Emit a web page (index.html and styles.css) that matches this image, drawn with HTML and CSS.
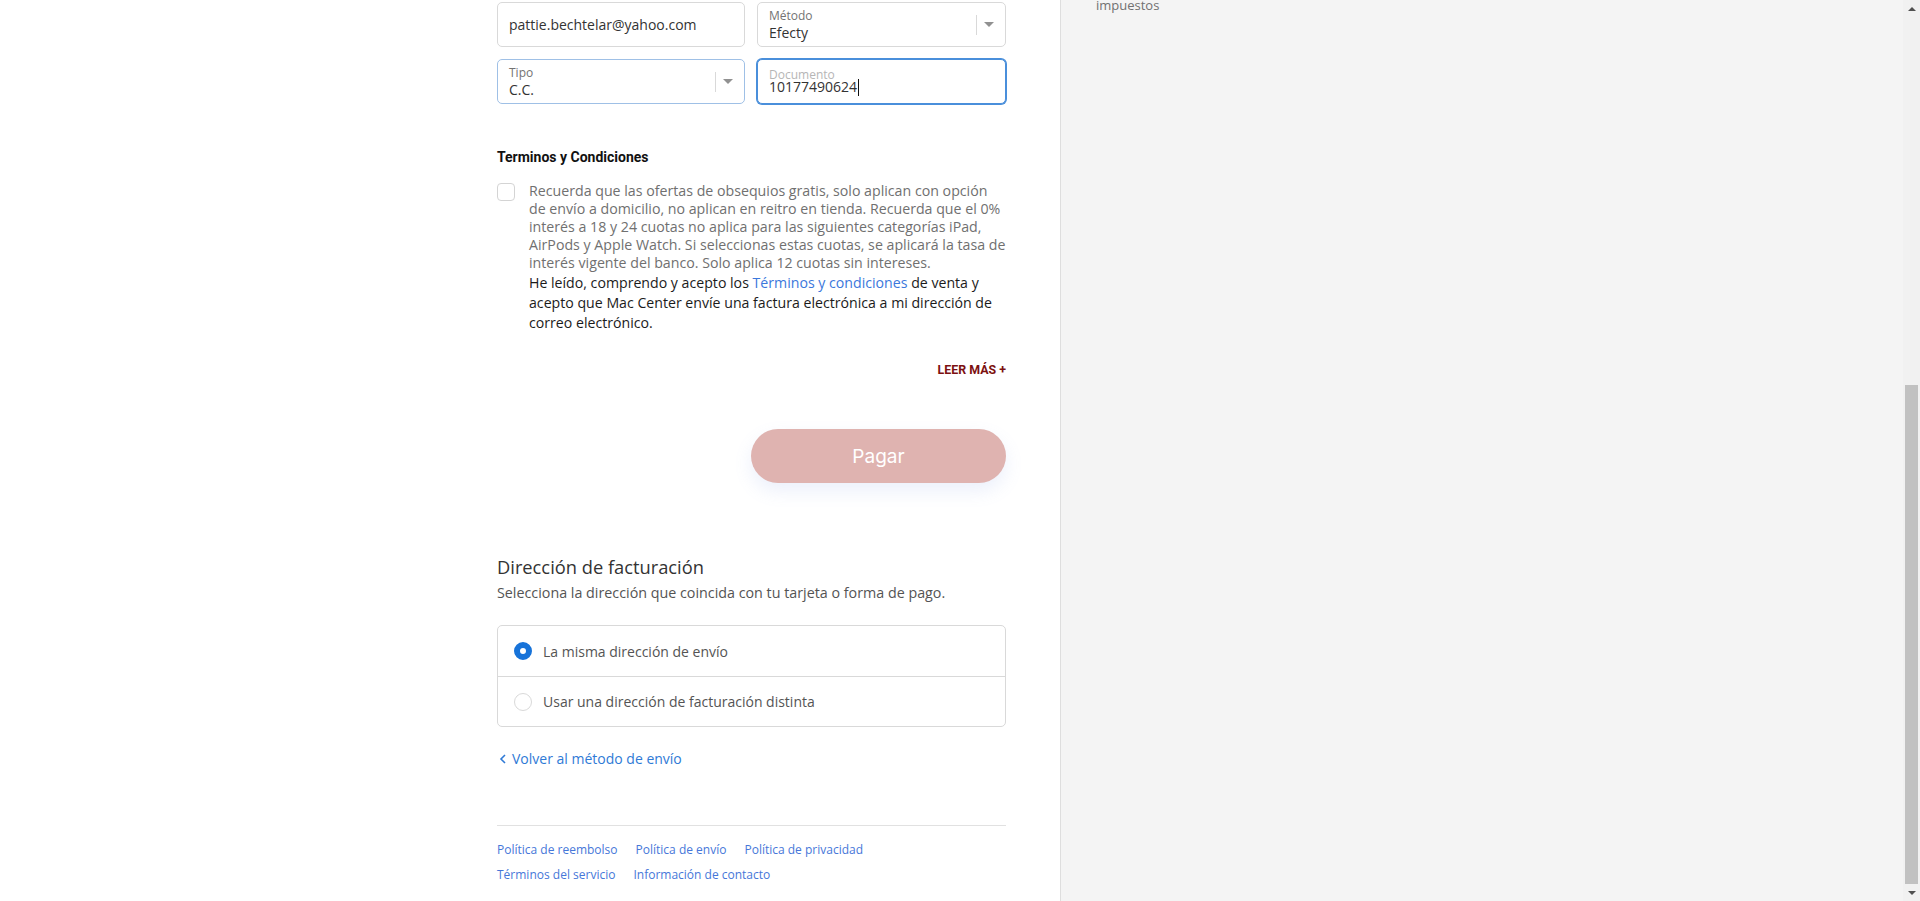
FILE: index.html
```html
<!DOCTYPE html>
<html lang="es">
<head>
<meta charset="utf-8">
<title>Checkout - Pago</title>
<link rel="stylesheet" href="styles.css">
</head>
<body>
<div class="page">
  <main class="main">
    <div class="content">
      <div class="field-grid">
        <div class="field">
          <span class="field-value">pattie.bechtelar@yahoo.com</span>
        </div>
        <div class="field select">
          <div class="select-text">
            <span class="field-label">Método</span>
            <span class="field-value">Efecty</span>
          </div>
          <span class="select-divider"></span>
          <span class="select-caret"></span>
        </div>
        <div class="field select hover">
          <div class="select-text">
            <span class="field-label">Tipo</span>
            <span class="field-value">C.C.</span>
          </div>
          <span class="select-divider"></span>
          <span class="select-caret"></span>
        </div>
        <div class="field focus">
          <div class="select-text tight">
            <span class="field-label light">Documento</span>
            <span class="field-value">10177490624<span class="cursor"></span></span>
          </div>
        </div>
      </div>

      <section class="terms">
        <h3 class="terms-title">Terminos y Condiciones</h3>
        <div class="check-row">
          <span class="checkbox"></span>
          <div class="terms-text">
            <p class="terms-gray">Recuerda que las ofertas de obsequios gratis, solo aplican con opción de envío a domicilio, no aplican en reitro en tienda. Recuerda que el 0% interés a 18 y 24 cuotas no aplica para las siguientes categorías iPad, AirPods y Apple Watch. Si seleccionas estas cuotas, se aplicará la tasa de interés vigente del banco. Solo aplica 12 cuotas sin intereses.</p>
            <p class="terms-dark">He leído, comprendo y acepto los <a class="terms-link" href="#">Términos y condiciones</a> de venta y acepto que Mac Center envíe una factura electrónica a mi dirección de correo electrónico.</p>
          </div>
        </div>
        <div class="leer-row"><a class="leer" href="#">LEER MÁS +</a></div>
      </section>

      <div class="pay-row">
        <button class="pay-btn" type="button">Pagar</button>
      </div>

      <section class="billing">
        <h2 class="billing-title">Dirección de facturación</h2>
        <p class="billing-sub">Selecciona la dirección que coincida con tu tarjeta o forma de pago.</p>
        <div class="radio-box">
          <div class="radio-row">
            <span class="radio checked"></span>
            <span class="radio-label">La misma dirección de envío</span>
          </div>
          <div class="radio-row">
            <span class="radio"></span>
            <span class="radio-label">Usar una dirección de facturación distinta</span>
          </div>
        </div>
      </section>

      <a class="back-link" href="#">
        <svg class="back-chevron" width="8" height="10" viewBox="0 0 8 10"><path d="M6 1 L2 5 L6 9" fill="none" stroke="currentColor" stroke-width="1.6"/></svg>
        <span>Volver al método de envío</span>
      </a>

      <footer class="footer">
        <ul class="policy-list">
          <li><a href="#">Política de reembolso</a></li>
          <li><a href="#">Política de envío</a></li>
          <li><a href="#">Política de privacidad</a></li>
          <li><a href="#">Términos del servicio</a></li>
          <li><a href="#">Información de contacto</a></li>
        </ul>
      </footer>
    </div>
  </main>

  <aside class="sidebar">
    <p class="sidebar-note">impuestos</p>
  </aside>

  <div class="scrollbar">
    <div class="sb-btn"><span class="sb-arrow up"></span></div>
    <div class="sb-track">
      <div class="sb-space"></div>
      <div class="sb-thumb"></div>
    </div>
    <div class="sb-btn"><span class="sb-arrow down"></span></div>
  </div>
</div>
</body>
</html>
```

FILE: styles.css
```css
* { box-sizing: border-box; }

html, body {
  margin: 0;
  padding: 0;
  height: 901px;
  overflow: hidden;
  background: #ffffff;
}

body {
  font-family: "Open Sans", "Noto Sans", Arial, sans-serif;
  font-size: 14px;
  color: #333333;
}

.page {
  display: flex;
  height: 901px;
}

/* ---------- main column ---------- */
.main {
  flex: 0 0 1060px;
  background: #ffffff;
  padding-left: 497px;
  padding-right: 54px;
}

.content {
  width: 509px;
  padding-top: 2px;
}

.field-grid {
  display: grid;
  grid-template-columns: 248px 249px;
  column-gap: 12px;
  row-gap: 12px;
}

.field {
  position: relative;
  height: 45px;
  border: 1px solid #d9d9d9;
  border-radius: 5px;
  background: #fff;
  display: flex;
  align-items: center;
  padding: 0 11px;
}

.field.hover {
  border-color: #9fc0e6;
}

.field.focus {
  border-color: #4a8fdb;
  box-shadow: 0 0 0 1px #4a8fdb;
}

.field-value {
  font-size: 14px;
  color: #333333;
  line-height: 17px;
}

.select-text {
  flex: 1;
  display: flex;
  flex-direction: column;
  padding-top: 1px;
}

.select-text.tight {
  padding-top: 0;
}

.field-label {
  font-size: 12px;
  line-height: 14px;
  color: #737373;
  margin-bottom: 1px;
}

.field-label.light {
  color: #b6b6b6;
  margin-bottom: -4px;
}

.select-divider {
  width: 1px;
  height: 20px;
  background: #d9d9d9;
  margin-right: 7px;
}

.select-caret {
  width: 0;
  height: 0;
  border-left: 5px solid transparent;
  border-right: 5px solid transparent;
  border-top: 5px solid #919191;
}

.cursor {
  display: inline-block;
  width: 1px;
  height: 17px;
  background: #111;
  vertical-align: -4px;
  margin-left: 1px;
}

/* ---------- terms ---------- */
.terms {
  margin-top: 44px;
}

.terms-title {
  margin: 0;
  font-family: Roboto, "Liberation Sans", Arial, sans-serif;
  font-weight: bold;
  font-size: 14px;
  line-height: 18px;
  color: #111;
}

.check-row {
  display: flex;
  align-items: flex-start;
  margin-top: 17px;
}

.checkbox {
  flex: 0 0 18px;
  width: 18px;
  height: 18px;
  border: 1px solid #d4d4d4;
  border-radius: 4px;
  background: #fff;
  margin-right: 14px;
}

.terms-text {
  flex: 1;
}

.terms-gray {
  margin: 0;
  margin-top: -1px;
  font-size: 14.2px;
  line-height: 18px;
  color: #707070;
}

.terms-dark {
  margin: 0;
  margin-top: 1px;
  font-size: 14.15px;
  line-height: 20px;
  color: #1b1b1b;
}

.terms-link {
  color: #3b78dc;
  text-decoration: none;
}

.leer-row {
  display: flex;
  justify-content: flex-end;
  margin-top: 29px;
}

.leer {
  font-family: Roboto, "Liberation Sans", Arial, sans-serif;
  font-weight: bold;
  font-size: 12.4px;
  line-height: 16px;
  color: #7c1010;
  text-decoration: none;
}

/* ---------- pay ---------- */
.pay-row {
  display: flex;
  justify-content: flex-end;
  margin-top: 51px;
}

.pay-btn {
  width: 255px;
  height: 54px;
  border: none;
  border-radius: 27px;
  background: #dfb3b0;
  color: #ffffff;
  font-family: Inter, Roboto, sans-serif;
  font-size: 19px;
  box-shadow: 0 8px 18px rgba(120, 150, 230, 0.14);
  cursor: default;
}

/* ---------- billing ---------- */
.billing {
  margin-top: 72px;
}

.billing-title {
  margin: 0;
  font-weight: normal;
  font-size: 18.3px;
  line-height: 24px;
  color: #333;
}

.billing-sub {
  margin: 4px 0 0;
  font-size: 14.3px;
  line-height: 19px;
  color: #545454;
}

.radio-box {
  margin-top: 23px;
  border: 1px solid #d9d9d9;
  border-radius: 5px;
  overflow: hidden;
}

.radio-row {
  display: flex;
  align-items: center;
  height: 50px;
  padding-left: 16px;
}

.radio-row + .radio-row {
  border-top: 1px solid #d9d9d9;
}

.radio {
  width: 18px;
  height: 18px;
  border-radius: 50%;
  border: 1px solid #d9d9d9;
  background: #fff;
  margin-right: 11px;
  flex: 0 0 18px;
}

.radio.checked {
  border: 6.5px solid #1773d9;
  background: #fff;
}

.radio-label {
  font-size: 14px;
  color: #545454;
}

/* ---------- back link ---------- */
.back-link {
  display: flex;
  align-items: center;
  gap: 5px;
  margin-top: 23px;
  color: #2f7ad6;
  text-decoration: none;
  font-size: 14px;
  line-height: 18px;
}

.back-chevron {
  margin-left: 2px;
}

/* ---------- footer ---------- */
.footer {
  margin-top: 57px;
  border-top: 1px solid #e1e1e1;
  padding-top: 13px;
}

.policy-list {
  list-style: none;
  margin: 0;
  padding: 0;
  display: flex;
  flex-wrap: wrap;
  width: 400px;
  column-gap: 18px;
  row-gap: 6px;
}

.policy-list a {
  font-size: 12px;
  line-height: 17px;
  color: #4677d9;
  text-decoration: none;
}

/* ---------- sidebar ---------- */
.sidebar {
  flex: 1;
  background: #f4f4f4;
  border-left: 1px solid #dedede;
  padding-left: 35px;
  overflow: hidden;
}

.sidebar-note {
  margin: -3px 0 0;
  font-size: 13px;
  line-height: 16px;
  color: #717171;
}

/* ---------- scrollbar ---------- */
.scrollbar {
  flex: 0 0 17px;
  background: #f1f1f1;
  display: flex;
  flex-direction: column;
}

.sb-btn {
  height: 17px;
  display: flex;
  align-items: center;
  justify-content: center;
}

.sb-arrow {
  width: 0;
  height: 0;
  border-left: 4px solid transparent;
  border-right: 4px solid transparent;
}

.sb-arrow.up {
  border-bottom: 4px solid #505050;
}

.sb-arrow.down {
  border-top: 4px solid #505050;
}

.sb-track {
  flex: 1;
  display: flex;
  flex-direction: column;
  padding: 0 2px;
}

.sb-space {
  height: 368px;
}

.sb-thumb {
  flex: 1;
  background: #c1c1c1;
}
```
